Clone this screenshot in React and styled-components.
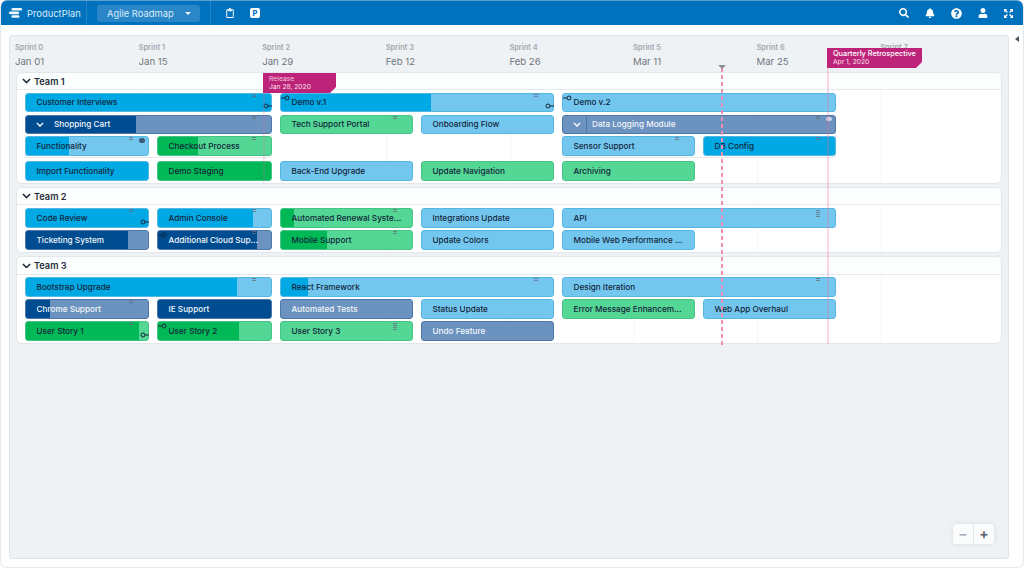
import React from 'react';
import styled, { createGlobalStyle } from 'styled-components';
import { FaSearch, FaBell, FaQuestionCircle, FaUser, FaRegClipboard } from 'react-icons/fa';

const Global = createGlobalStyle`
  html, body { margin: 0; padding: 0; background: #fff; }
  body { font-family: Inter, "Liberation Sans", sans-serif; }
  * { box-sizing: border-box; }
`;

const Shell = styled.div`
  width: 1024px; height: 568px; display: flex; flex-direction: column; overflow: hidden;
  border-radius: 7px; background: #fff; border: 1px solid #e3e8ed; border-top: 0;
`;
const TopBar = styled.header`
  height: 25px; margin: 0 -1px; flex: none; display: flex; align-items: center; background: #0071bd; color: #fff;
  border-radius: 7px 7px 0 0; border-top: 1px solid #5d9fd0;
`;
const Brand = styled.div`
  width: 87px; height: 100%; padding-left: 9px; display: flex; align-items: center; gap: 5px;
  font-size: 9.4px; font-weight: 400; color: #d9ecf8; border-right: 1px solid #2585c6;
`;
const RoadmapButton = styled.button`
  margin-left: 10px; width: 103px; height: 17px; padding: 0 9px 0 10px; border: 0; border-radius: 3px;
  display: flex; align-items: center; justify-content: space-between; background: #2b86c8; color: #d9ecf8;
  font: 400 9.4px Inter, sans-serif;
`;
const Caret = styled.i`
  width: 0; height: 0; border-left: 3.5px solid transparent; border-right: 3.5px solid transparent; border-top: 3.5px solid #eaf5fc;
`;
const ToolGroup = styled.div`
  height: 100%; margin-left: 10px; padding-left: 14px; display: flex; align-items: center; gap: 15px;
  border-left: 1px solid #2585c6; font-size: 10px;
`;
const PBadge = styled.span`
  width: 10px; height: 10px; border-radius: 2px; background: #fff; color: #0071bd;
  display: flex; align-items: center; justify-content: center; font-size: 7.5px; font-weight: 800;
`;
const RightTools = styled.div`
  margin-left: auto; padding-right: 11px; display: flex; align-items: center; gap: 16px; font-size: 10px;
`;
const Main = styled.main`
  flex: 1; min-height: 0; display: flex; padding: 10px 0 8px 8px;
`;
const Panel = styled.section`
  position: relative; width: 1000px; height: 524px; padding: 0 6px; background: #eff2f5; border: 1px solid #dfe4e9; border-radius: 3px;
`;
const SideStrip = styled.aside`
  flex: 1; display: flex; justify-content: center; padding-top: 1px; padding-left: 1px;
`;
const CollapseArrow = styled.i`
  width: 0; height: 0; border-top: 3px solid transparent; border-bottom: 3px solid transparent; border-right: 4px solid #4a5560;
`;
const Timeline = styled.div`
  height: 36px; margin-left: -1px; display: grid; grid-template-columns: repeat(8, 123.6px);
`;
const Tick = styled.div`
  padding-top: 7px; overflow: hidden;
`;
const SprintName = styled.div`
  font-size: 7.4px; line-height: 9px; font-weight: 600; color: #a2a7ae;
`;
const TickDate = styled.div`
  margin-top: 4px; font-size: 9.6px; line-height: 12px; color: #6f767e;
`;
const Teams = styled.div`
  display: flex; flex-direction: column; gap: 3.3px;
`;
const TeamCard = styled.article`
  background: #fff; border: 1px solid #e3e7ec; border-radius: 6px; overflow: hidden;
`;
const TeamHeader = styled.div`
  height: ${p => p.$h}px; padding-left: 5px; display: flex; align-items: center; gap: 3px;
  background: #fcfdfd; border-bottom: 1px solid #e6e9ee;
  font-size: 9.2px; font-weight: 600; color: #1f2c3b;
`;
const TeamBody = styled.div`
  display: grid; align-items: end; padding: ${p => p.$top}px 0 ${p => p.$bottom}px 8px;
  grid-template-columns: 124px 115px 133px 133px 133px 133px; column-gap: 8px;
  grid-template-rows: ${p => p.$rows};
  background-image: linear-gradient(to right, #f4f6f7 1px, transparent 1px);
  background-size: 123.6px 100%;
  background-position: -1.4px 0;
`;
const TONES = {
  blue: { dark: '#00a8e4', light: '#73c7ef', border: '#55b6e3', text: '#12253a' },
  green: { dark: '#00b956', light: '#54d695', border: '#45c486', text: '#12253a' },
  navy: { dark: '#004c90', light: '#6c92bf', border: '#4d77a8', text: '#f2f6fa' },
};
const Bar = styled.div`
  position: relative; height: 19.5px; grid-column: ${p => p.$col} / span ${p => p.$span};
  grid-row: ${p => p.$row}; display: flex; align-items: center; padding-left: 10.5px;
  border: 1px solid ${p => TONES[p.$tone].border}; border-radius: 3px;
  background: linear-gradient(to right, ${p => TONES[p.$tone].dark} var(--pct), ${p => TONES[p.$tone].light} var(--pct));
  color: ${p => TONES[p.$tone].text}; font-size: 8.2px; font-weight: 500; white-space: nowrap;
`;
const GroupToggle = styled.span`
  width: ${p => p.$w}px; height: 100%; flex: none; margin-left: -7px; margin-right: 5px; display: flex; align-items: center; padding-left: 6px;
  border-right: ${p => (p.$divide ? '1px solid #4d77a8' : '0')};
`;
const Handle = styled.span`
  position: absolute; right: 15px; top: ${p => p.$top ?? 0}px; width: 4px; height: ${p => p.$h ?? 3}px;
  background: repeating-linear-gradient(to bottom, #5f6c78 0 1px, transparent 1px 2px); opacity: .75;
`;
const Bubble = styled.span`
  position: absolute; right: 3px; top: 1px; width: 6px; height: 4.5px; border-radius: 3px; background: ${p => p.$light ? '#c9d7e6' : '#3a5c78'};
`;
const Link = styled.svg`
  position: absolute; width: 9px; height: 6px; overflow: visible;
  ${p => p.$end ? 'right: -1px; bottom: 2px;' : 'left: 0; top: 1px;'}
`;
const GroupEdge = styled.div`
  grid-column: ${p => p.$col} / span ${p => p.$span}; grid-row: ${p => p.$row};
  align-self: end; height: 24px; margin-bottom: -2px; border: 1px solid #e6e9ee; border-top: 0; border-radius: 0 0 3px 3px;
`;
const VLine = styled.div`
  position: absolute; left: ${p => p.$x - 10}px; top: ${p => p.$y - 36}px; height: ${p => p.$h}px; width: 1.5px; pointer-events: none;
  background: ${p => p.$dashed
    ? 'repeating-linear-gradient(to bottom, #f08db3 0 4px, transparent 4px 7px)'
    : `rgba(232, 110, 160, ${p.$soft ? 0.18 : 0.28})`};
`;
const Pointer = styled.i`
  position: absolute; left: ${717.5 - 10}px; top: ${64.5 - 36}px; width: 0; height: 0;
  border-left: 4px solid transparent; border-right: 4px solid transparent; border-top: 4px solid #8b8f96;
`;
const Flag = styled.div`
  position: absolute; left: ${p => p.$x - 10}px; top: ${p => p.$y - 36}px; width: ${p => p.$w}px; height: 20px; padding: 1px 0 0 6px;
  background: #bc2379; color: #fff; clip-path: polygon(0 0, 100% 0, 100% 70%, calc(100% - 6px) 100%, 0 100%);
`;
const FlagTitle = styled.div`
  font-size: ${p => p.$big ? 7.3 : 6.8}px; line-height: 9px; font-weight: ${p => p.$big ? 500 : 400}; color: ${p => p.$big ? '#fff' : '#f2c6dc'}; white-space: nowrap;
`;
const FlagDate = styled.div`
  font-size: 6.7px; line-height: 9px; color: #fbe5f0; white-space: nowrap;
`;
const Zoom = styled.div`
  position: absolute; right: 14px; bottom: 14px; width: 41px; height: 20px; display: grid; grid-template-columns: 1fr 1fr; gap: 1px;
  background: #e3e6ea; border-radius: 3px; overflow: hidden; box-shadow: 0 0 5px rgba(60,70,90,.12);
`;
const ZoomBtn = styled.span`
  display: flex; align-items: center; justify-content: center; background: #fbfcfc; color: ${p => p.$on ? '#555c66' : '#a5abb2'}; font-size: 14px; font-weight: 600; line-height: 1;
`;

const Chevron = ({ color = '#1f2c3b', w = 9 }) => (
  <svg width={w} height={w * 0.62} viewBox="0 0 10 6" fill="none" stroke={color} strokeWidth="1.7"><path d="M1 1l4 4 4-4" /></svg>
);
const Logo = () => (
  <svg width="13" height="10" viewBox="0 0 13 10" fill="#eef7fc">
    <rect x="2.5" y="0" width="10.5" height="2.6" rx="1.2" />
    <rect x="0" y="3.6" width="10" height="2.6" rx="1.2" />
    <rect x="2.5" y="7.2" width="8" height="2.6" rx="1.2" />
  </svg>
);
const Expand = () => (
  <svg width="9" height="9" viewBox="0 0 10 10" fill="none" stroke="#fff" strokeWidth="1.5">
    <path d="M1 1l2.8 2.8M9 1L6.2 3.8M1 9l2.8-2.8M9 9L6.2 6.2" />
    <path d="M0.5 3V.5H3M7 .5h2.5V3M.5 7v2.5H3M9.5 7v2.5H7" />
  </svg>
);
const LinkIcon = ({ end }) => (
  <Link $end={end} viewBox="0 0 9 6">
    {end
      ? <g fill="none" stroke="#14263a" strokeWidth="1"><circle cx="3" cy="3" r="2" /><path d="M5 3h4" /></g>
      : <g fill="none" stroke="#14263a" strokeWidth="1"><circle cx="6" cy="3" r="2" /><path d="M0 3h4" /></g>}
  </Link>
);

const B = (name, col, span, row, tone, pct, extra = {}) => ({ name, col, span, row, tone, pct, ...extra });

const TEAMS = [
  {
    name: 'Team 1', header: 17, top: 2.5, bottom: 2, rows: '19.5px 22px 21.5px 25px',
    edges: [{ col: 1, span: 2, row: 3 }, { col: 5, span: 2, row: 3 }],
    bars: [
      B('Customer Interviews', 1, 2, 1, 'blue', 100, { handle: 1, end: 1 }),
      B('Demo v.1', 3, 2, 1, 'blue', 55, { handle: 1, start: 1, end: 1 }),
      B('Demo v.2', 5, 2, 1, 'blue', 0, { start: 1 }),
      B('Shopping Cart', 1, 2, 2, 'navy', 45, { group: 1, handle: 1 }),
      B('Tech Support Portal', 3, 1, 2, 'green', 0, { handle: 1 }),
      B('Onboarding Flow', 4, 1, 2, 'blue', 0),
      B('Data Logging Module', 5, 2, 2, 'navy', 0, { group: 1, divide: 1, handle: 1, bubble: 'light' }),
      B('Functionality', 1, 1, 3, 'blue', 35, { handle: 1, bubble: 'dark' }),
      B('Checkout Process', 2, 1, 3, 'green', 35, { handle: 1 }),
      B('Sensor Support', 5, 1, 3, 'blue', 0, { handle: 1 }),
      B('DB Config', 6, 1, 3, 'blue', 100, { handle: 1 }),
      B('Import Functionality', 1, 1, 4, 'blue', 100),
      B('Demo Staging', 2, 1, 4, 'green', 100),
      B('Back-End Upgrade', 3, 1, 4, 'blue', 0),
      B('Update Navigation', 4, 1, 4, 'green', 0),
      B('Archiving', 5, 1, 4, 'green', 0),
    ],
  },
  {
    name: 'Team 2', header: 17.7, top: 2.5, bottom: 2, rows: '19.7px 22px',
    bars: [
      B('Code Review', 1, 1, 1, 'blue', 100, { handle: 1, end: 1 }),
      B('Admin Console', 2, 1, 1, 'blue', 84, { handle: 1 }),
      B('Automated Renewal Syste...', 3, 1, 1, 'green', 10, { handle: 1 }),
      B('Integrations Update', 4, 1, 1, 'blue', 0),
      B('API', 5, 2, 1, 'blue', 0, { handle: 1, tall: 1 }),
      B('Ticketing System', 1, 1, 2, 'navy', 84),
      B('Additional Cloud Sup...', 2, 1, 2, 'navy', 88, { handle: 1, start: 1 }),
      B('Mobile Support', 3, 1, 2, 'green', 35, { handle: 1 }),
      B('Update Colors', 4, 1, 2, 'blue', 0),
      B('Mobile Web Performance ...', 5, 1, 2, 'blue', 0),
    ],
  },
  {
    name: 'Team 3', header: 18.3, top: 1.8, bottom: 2.7, rows: '19.5px 22px 22px',
    bars: [
      B('Bootstrap Upgrade', 1, 2, 1, 'blue', 86, { handle: 1 }),
      B('React Framework', 3, 2, 1, 'blue', 10, { handle: 1 }),
      B('Design Iteration', 5, 2, 1, 'blue', 0, { handle: 1 }),
      B('Chrome Support', 1, 1, 2, 'navy', 20, { handle: 1 }),
      B('IE Support', 2, 1, 2, 'navy', 100),
      B('Automated Tests', 3, 1, 2, 'navy', 0),
      B('Status Update', 4, 1, 2, 'blue', 0),
      B('Error Message Enhancem...', 5, 1, 2, 'green', 0),
      B('Web App Overhaul', 6, 1, 2, 'blue', 0),
      B('User Story 1', 1, 1, 3, 'green', 93, { handle: 1, end: 1 }),
      B('User Story 2', 2, 1, 3, 'green', 72, { start: 1 }),
      B('User Story 3', 3, 1, 3, 'green', 0, { handle: 1, tall: 1 }),
      B('Undo Feature', 4, 1, 3, 'navy', 0),
    ],
  },
];

const TICKS = [
  ['Sprint 0', 'Jan 01'], ['Sprint 1', 'Jan 15'], ['Sprint 2', 'Jan 29'], ['Sprint 3', 'Feb 12'],
  ['Sprint 4', 'Feb 26'], ['Sprint 5', 'Mar 11'], ['Sprint 6', 'Mar 25'], ['Sprint 7', ''],
];

const RoadmapBar = ({ b }) => (
  <Bar $col={b.col} $span={b.span} $row={b.row} $tone={b.tone} style={{ '--pct': `${b.pct}%` }}>
    {b.group && <GroupToggle $w={b.divide ? 20.5 : 19.5} $divide={b.divide}><Chevron color="#fff" w={8} /></GroupToggle>}
    {b.start && <LinkIcon />}
    {b.name}
    {b.handle && <Handle $top={b.tall ? 1 : 0} $h={b.tall ? 7 : 3} />}
    {b.bubble && <Bubble $light={b.bubble === 'light'} />}
    {b.end && <LinkIcon end />}
  </Bar>
);

export default function App() {
  return (
    <>
      <Global />
      <Shell>
        <TopBar>
          <Brand><Logo />ProductPlan</Brand>
          <RoadmapButton>Agile Roadmap<Caret /></RoadmapButton>
          <ToolGroup>
            <FaRegClipboard />
            <PBadge>P</PBadge>
          </ToolGroup>
          <RightTools>
            <FaSearch size={10} />
            <FaBell size={10} />
            <FaQuestionCircle size={11} />
            <FaUser size={10} />
            <Expand />
          </RightTools>
        </TopBar>
        <Main>
          <Panel>
            <Timeline>
              {TICKS.map(([s, d]) => (
                <Tick key={s}>
                  <SprintName>{s}</SprintName>
                  {d && <TickDate>{d}</TickDate>}
                </Tick>
              ))}
            </Timeline>
            <Teams>
              {TEAMS.map(t => (
                <TeamCard key={t.name}>
                  <TeamHeader $h={t.header}><Chevron />{t.name}</TeamHeader>
                  <TeamBody $top={t.top} $bottom={t.bottom} $rows={t.rows}>
                    {(t.edges || []).map((e, i) => <GroupEdge key={i} $col={e.col} $span={e.span} $row={e.row} />)}
                    {t.bars.map(b => <RoadmapBar key={b.name} b={b} />)}
                  </TeamBody>
                </TeamCard>
              ))}
            </Teams>
            <VLine $x={263} $y={92} $h={91} $soft />
            <VLine $x={827} $y={48} $h={296} />
            <VLine $x={721} $y={68} $h={277} $dashed />
            <Pointer />
            <Flag $x={263} $y={73} $w={73}>
              <FlagTitle>Release</FlagTitle>
              <FlagDate>Jan 28, 2020</FlagDate>
            </Flag>
            <Flag $x={827} $y={48} $w={95}>
              <FlagTitle $big>Quarterly Retrospective</FlagTitle>
              <FlagDate>Apr 1, 2020</FlagDate>
            </Flag>
            <Zoom>
              <ZoomBtn>−</ZoomBtn>
              <ZoomBtn $on>+</ZoomBtn>
            </Zoom>
          </Panel>
          <SideStrip><CollapseArrow /></SideStrip>
        </Main>
      </Shell>
    </>
  );
}
